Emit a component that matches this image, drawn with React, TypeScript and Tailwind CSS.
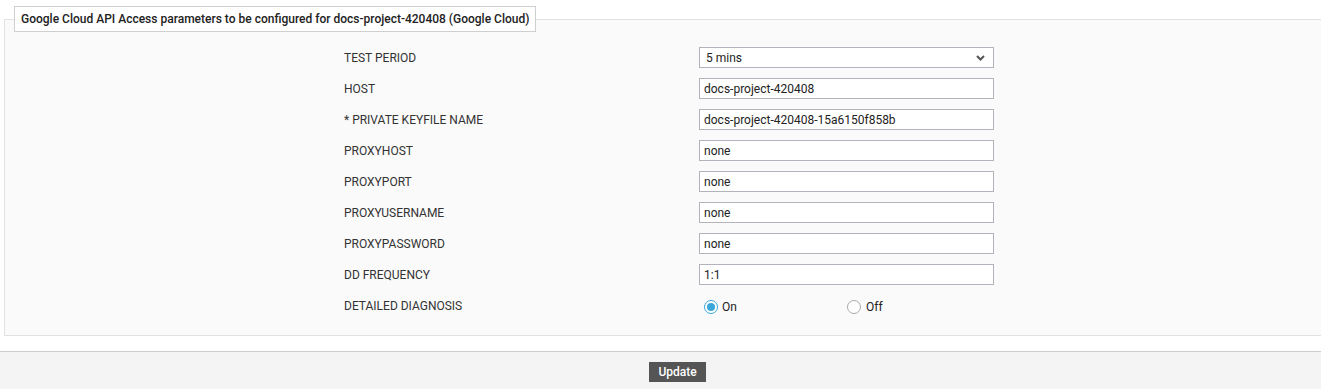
import React from "react";

const rows: { label: string; value: string; kind?: "select" }[] = [
  { label: "TEST PERIOD", value: "5 mins", kind: "select" },
  { label: "HOST", value: "docs-project-420408" },
  { label: "* PRIVATE KEYFILE NAME", value: "docs-project-420408-15a6150f858b" },
  { label: "PROXYHOST", value: "none" },
  { label: "PROXYPORT", value: "none" },
  { label: "PROXYUSERNAME", value: "none" },
  { label: "PROXYPASSWORD", value: "none" },
  { label: "DD FREQUENCY", value: "1:1" },
];

export default function App() {
  return (
    <div
      className="w-[1321px] h-[389px] overflow-hidden bg-white text-[12px] text-[#333]"
      style={{ fontFamily: "Roboto, 'Liberation Sans', sans-serif" }}
    >
      <div className="pt-[6px] pl-[4px]">
        <fieldset className="w-[1340px] border border-[#e2e2e2] bg-[#fafafa] pb-[14px]">
          <legend className="ml-[9px] border border-[#cfcfcf] bg-white px-[6px] h-[26px] leading-[24px] font-medium text-[12px] text-[#222]">
            Google Cloud API Access parameters to be configured for docs-project-420408 (Google Cloud)
          </legend>
          <div className="pt-[10px] pl-[339px] flex flex-col">
            {rows.map((r) => (
              <div key={r.label} className="flex items-center h-[31px]">
                <div className="w-[355px]">{r.label}</div>
                {r.kind === "select" ? (
                  <div className="w-[295px] h-[21px] border border-[#b3b3bc] bg-white flex items-center justify-between pl-[6px] pr-[8px] text-[#222]">
                    <span>{r.value}</span>
                    <svg width="9" height="6" viewBox="0 0 9 6">
                      <path d="M1 1 L4.5 4.5 L8 1" stroke="#555" strokeWidth="2" fill="none" />
                    </svg>
                  </div>
                ) : (
                  <div className="w-[295px] h-[21px] border border-[#b3b3bc] bg-white flex items-center pl-[4px] text-[#222]">
                    {r.value}
                  </div>
                )}
              </div>
            ))}
            <div className="flex items-center h-[31px]">
              <div className="w-[355px]">DETAILED DIAGNOSIS</div>
              <div className="flex items-center w-[148px] pl-[5px] pt-[2px]">
                <span className="w-[14px] h-[14px] rounded-full border border-[#3aa7d8] bg-white flex items-center justify-center">
                  <span className="w-[8px] h-[8px] rounded-full bg-[#3aa7d8]" />
                </span>
                <span className="ml-[4px] text-[#222]">On</span>
              </div>
              <div className="flex items-center pt-[2px]">
                <span className="w-[14px] h-[14px] rounded-full border border-[#aaaaaa] bg-white" />
                <span className="ml-[5px] text-[#222]">Off</span>
              </div>
            </div>
          </div>
        </fieldset>
      </div>
      <div className="mt-[15px] border-t border-[#cccccc] bg-[#f4f4f4] h-[40px] pt-[10px] pl-[649px]">
        <button className="w-[57px] h-[20px] bg-[#555555] text-white text-[12px] font-medium leading-[20px]">
          Update
        </button>
      </div>
    </div>
  );
}
